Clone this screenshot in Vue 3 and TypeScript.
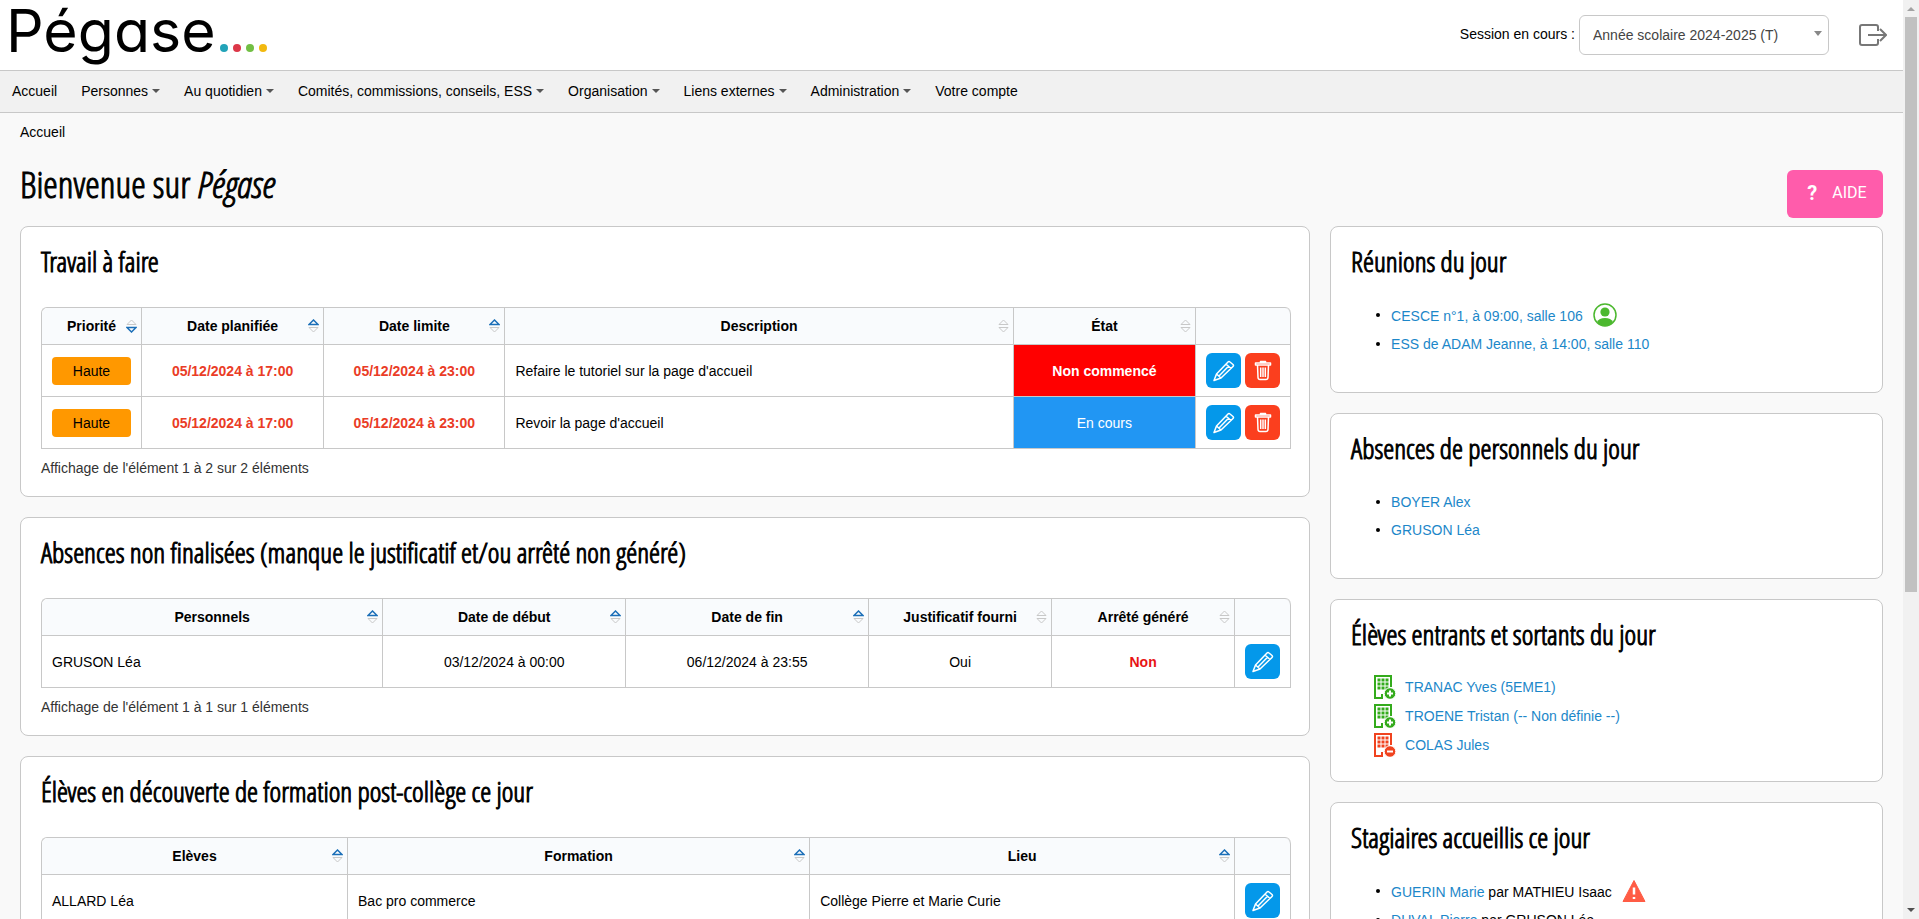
<script setup lang="ts">
import { ref } from 'vue'

type SortState = 'none' | 'asc' | 'desc'
interface Column { label: string; width?: string; sort?: SortState }
interface Cell { text: string; kind?: string }
interface Board {
  title: string
  columns: Column[]
  rows: Cell[][]
  actions: string[]
  info: string
}
interface MenuEntry { label: string; menu: boolean }

const menu: MenuEntry[] = [
  { label: 'Accueil', menu: false },
  { label: 'Personnes', menu: true },
  { label: 'Au quotidien', menu: true },
  { label: 'Comités, commissions, conseils, ESS', menu: true },
  { label: 'Organisation', menu: true },
  { label: 'Liens externes', menu: true },
  { label: 'Administration', menu: true },
  { label: 'Votre compte', menu: false },
]

const session = ref('2024')

const boards: Board[] = [
  {
    title: 'Travail à faire',
    columns: [
      { label: 'Priorité', width: '8%', sort: 'desc' },
      { label: 'Date planifiée', width: '14.6%', sort: 'asc' },
      { label: 'Date limite', width: '14.5%', sort: 'asc' },
      { label: 'Description', sort: 'none' },
      { label: 'État', width: '14.6%', sort: 'none' },
      { label: '', width: '95px' },
    ],
    rows: [
      [
        { text: 'Haute', kind: 'badge' },
        { text: '05/12/2024 à 17:00', kind: 'late' },
        { text: '05/12/2024 à 23:00', kind: 'late' },
        { text: "Refaire le tutoriel sur la page d'accueil" },
        { text: 'Non commencé', kind: 'todo' },
      ],
      [
        { text: 'Haute', kind: 'badge' },
        { text: '05/12/2024 à 17:00', kind: 'late' },
        { text: '05/12/2024 à 23:00', kind: 'late' },
        { text: "Revoir la page d'accueil" },
        { text: 'En cours', kind: 'doing' },
      ],
    ],
    actions: ['edit', 'delete'],
    info: "Affichage de l'élément 1 à 2 sur 2 éléments",
  },
  {
    title: 'Absences non finalisées (manque le justificatif et/ou arrêté non généré)',
    columns: [
      { label: 'Personnels', sort: 'asc' },
      { label: 'Date de début', width: '19.45%', sort: 'asc' },
      { label: 'Date de fin', width: '19.45%', sort: 'asc' },
      { label: 'Justificatif fourni', width: '14.65%', sort: 'none' },
      { label: 'Arrêté généré', width: '14.65%', sort: 'none' },
      { label: '', width: '56px' },
    ],
    rows: [
      [
        { text: 'GRUSON Léa' },
        { text: '03/12/2024 à 00:00', kind: 'center' },
        { text: '06/12/2024 à 23:55', kind: 'center' },
        { text: 'Oui', kind: 'center' },
        { text: 'Non', kind: 'missing' },
      ],
    ],
    actions: ['edit'],
    info: "Affichage de l'élément 1 à 1 sur 1 éléments",
  },
  {
    title: 'Élèves en découverte de formation post-collège ce jour',
    columns: [
      { label: 'Elèves', width: '24.5%', sort: 'asc' },
      { label: 'Formation', width: '37%', sort: 'asc' },
      { label: 'Lieu', sort: 'asc' },
      { label: '', width: '56px' },
    ],
    rows: [
      [{ text: 'ALLARD Léa' }, { text: 'Bac pro commerce' }, { text: 'Collège Pierre et Marie Curie' }],
    ],
    actions: ['edit'],
    info: "Affichage de l'élément 1 à 1 sur 1 éléments",
  },
]

const moves = [
  { name: 'TRANAC Yves (5EME1)', entering: true },
  { name: 'TROENE Tristan (-- Non définie --)', entering: true },
  { name: 'COLAS Jules', entering: false },
]
const windowRows = [4, 8, 12]
const windowCols = [4, 8, 12]
</script>

<template>
  <div class="shell">
    <div class="page">
      <header class="top">
        <a class="logo" href="#" aria-label="Pégase">
          <span class="logo-name">Pégase</span>
          <span class="logo-dots"><i class="dot teal"></i><i class="dot red"></i><i class="dot green"></i><i class="dot yellow"></i></span>
        </a>
        <div class="session">
          <label for="session">Session en cours :</label>
          <div class="select-wrap">
            <select id="session" v-model="session">
              <option value="2024">Année scolaire 2024-2025 (T)</option>
            </select>
            <svg class="select-caret" viewBox="0 0 8 5" aria-hidden="true"><path d="M0 0h8L4 5z" /></svg>
          </div>
          <button class="logout" type="button" aria-label="Se déconnecter">
            <svg viewBox="0 0 28 22" aria-hidden="true">
              <path d="M19 7V3Q19 1 17 1H3Q1 1 1 3V19Q1 21 3 21H17Q19 21 19 19V15M9 11H27M21 5L27 11L21 17" />
            </svg>
          </button>
        </div>
      </header>

      <nav class="menu" aria-label="Menu principal">
        <a v-for="entry in menu" :key="entry.label" href="#">
          {{ entry.label }}
          <svg v-if="entry.menu" class="caret" viewBox="0 0 8 4" aria-hidden="true"><path d="M0 0h8L4 4z" /></svg>
        </a>
      </nav>

      <main class="content">
        <div class="crumb"><a href="#">Accueil</a></div>
        <div class="heading">
          <h1>Bienvenue sur <em>Pégase</em></h1>
          <button class="help" type="button"><b>?</b><span>AIDE</span></button>
        </div>

        <div class="columns">
          <div class="column">
            <section v-for="board in boards" :key="board.title" class="card">
              <h2>{{ board.title }}</h2>
              <table>
                <colgroup>
                  <col v-for="(c, i) in board.columns" :key="i" :style="{ width: c.width }" />
                </colgroup>
                <thead>
                  <tr>
                    <th v-for="(c, i) in board.columns" :key="i" scope="col">
                      <button v-if="c.sort" class="sort" type="button">
                        <span>{{ c.label }}</span>
                        <svg :class="c.sort" viewBox="0 0 11 14" aria-hidden="true">
                          <path class="up" d="M1 5.500L5.500 1L10 5.500Z" />
                          <path class="down" d="M1 8.500L5.500 13L10 8.500Z" />
                        </svg>
                      </button>
                    </th>
                  </tr>
                </thead>
                <tbody>
                  <tr v-for="(row, r) in board.rows" :key="r">
                    <td v-for="(cell, i) in row" :key="i" :class="cell.kind">
                      <span>{{ cell.text }}</span>
                    </td>
                    <td class="actions">
                      <div>
                        <button
                          v-for="a in board.actions"
                          :key="a"
                          type="button"
                          :class="a"
                          :aria-label="a === 'edit' ? 'Modifier' : 'Supprimer'"
                        >
                          <svg v-if="a === 'edit'" viewBox="0 0 24 24" aria-hidden="true">
                            <path d="M2 21.500L4.500 15L16 3Q17 2 18 3L21 5.500Q22 6.500 21 7.500L9 19ZM4.500 15L9 19M14 5L19 9.500M7 17L16.500 7.300" />
                          </svg>
                          <svg v-else viewBox="0 0 24 24" aria-hidden="true">
                            <path d="M9.500 3.500V2.500H14.500V3.500M4.500 4H19.500V6H4.500ZM6.500 6L7 18.500Q7.200 20.500 9 20.500H15Q16.800 20.500 17 18.500L17.500 6M9.700 8.500V18M12 8.500V18M14.300 8.500V18" />
                          </svg>
                        </button>
                      </div>
                    </td>
                  </tr>
                </tbody>
              </table>
              <p class="info">{{ board.info }}</p>
            </section>
          </div>

          <div class="column">
            <section class="card">
              <h2>Réunions du jour</h2>
              <ul>
                <li>
                  <div class="line">
                    <a href="#">CESCE n°1, à 09:00, salle 106</a>
                    <svg class="mark person" viewBox="0 0 24 24" role="img" aria-label="Participant">
                      <circle class="ring" cx="12" cy="12" r="11" />
                      <circle cx="12" cy="9" r="4.600" />
                      <path d="M4 19Q6 15 12 15Q18 15 20 19Q17 23 12 23Q7 23 4 19Z" />
                    </svg>
                  </div>
                </li>
                <li><div class="line"><a href="#">ESS de ADAM Jeanne, à 14:00, salle 110</a></div></li>
              </ul>
            </section>

            <section class="card">
              <h2>Absences de personnels du jour</h2>
              <ul>
                <li><div class="line"><a href="#">BOYER Alex</a></div></li>
                <li><div class="line"><a href="#">GRUSON Léa</a></div></li>
              </ul>
            </section>

            <section class="card">
              <h2>Élèves entrants et sortants du jour</h2>
              <ul class="moves">
                <li v-for="m in moves" :key="m.name" :class="m.entering ? 'in' : 'out'">
                  <svg viewBox="0 0 22 24" aria-hidden="true">
                    <path class="wall" d="M17 12V1H1V23H8V19" />
                    <template v-for="y in windowRows" :key="y">
                      <rect v-for="x in windowCols" :key="x" :x="x - 0.5" :y="y - 0.5" width="3" height="3" />
                    </template>
                    <circle class="disc" cx="16" cy="18.500" r="5.800" />
                    <path class="sign" :d="m.entering ? 'M13 18.500H19M16 15.500V21.500' : 'M13 18.500H19'" />
                  </svg>
                  <a href="#">{{ m.name }}</a>
                </li>
              </ul>
            </section>

            <section class="card">
              <h2>Stagiaires accueillis ce jour</h2>
              <ul>
                <li>
                  <div class="line">
                    <span><a href="#">GUERIN Marie</a> par MATHIEU Isaac</span>
                    <svg class="mark warning" viewBox="0 0 24 24" role="img" aria-label="Attention">
                      <path d="M12 1.500L23 22.500H1Z" />
                      <path class="bang" d="M12 8.500V15.500M12 18V20" />
                    </svg>
                  </div>
                </li>
                <li><div class="line"><span><a href="#">DUVAL Pierre</a> par GRUSON Léa</span></div></li>
              </ul>
            </section>
          </div>
        </div>
      </main>
    </div>

    <div class="scrollbar" aria-hidden="true">
      <svg class="arrow dim" viewBox="0 0 8 4"><path d="M0 4h8L4 0z" /></svg>
      <div class="track"><div class="thumb"></div></div>
      <svg class="arrow" viewBox="0 0 8 4"><path d="M0 0h8L4 4z" /></svg>
    </div>
  </div>
</template>

<style>
body {
  margin: 0;
  background: #f9f9f9;
}
</style>

<style scoped>
* {
  box-sizing: border-box;
}
.shell {
  display: flex;
  height: 100vh;
  overflow: hidden;
  background: #f9f9f9;
  color: #000;
  font: 14px/20px "Liberation Sans", Arial, sans-serif;
}
.page {
  flex: 1;
  min-width: 0;
  overflow: hidden;
}
a {
  color: #1c87c9;
  text-decoration: none;
}
button {
  padding: 0;
  border: 0;
  background: none;
  color: inherit;
  font: inherit;
  cursor: pointer;
}
svg {
  display: block;
  flex: none;
}

.top {
  display: flex;
  justify-content: space-between;
  align-items: center;
  height: 71px;
  padding: 0 16px 0 6px;
  border-bottom: 1px solid #c8c8c8;
  background: #fff;
}
.logo {
  display: flex;
  align-items: baseline;
  gap: 4px;
  padding-bottom: 8px;
  color: #000;
}
.logo-name {
  font: 400 59px/60px Inter, "Century Gothic", sans-serif;
  font-feature-settings: "cv11";
}
.logo-dots {
  display: flex;
  gap: 5px;
}
.dot {
  width: 8px;
  height: 8px;
  border-radius: 50%;
}
.teal { background: #22a3b8; }
.red { background: #dc3748; }
.green { background: #72bf44; }
.yellow { background: #f2b90f; }

.session {
  display: flex;
  align-items: center;
  gap: 4px;
}
.session label {
  padding-bottom: 2px;
}
.select-wrap {
  position: relative;
}
select {
  display: block;
  width: 250px;
  height: 40px;
  padding: 0 28px 0 13px;
  border: 1px solid #c8c8c8;
  border-radius: 6px;
  background: #fff;
  color: #444;
  font: inherit;
  appearance: none;
}
.select-caret {
  position: absolute;
  top: 16px;
  right: 7px;
  width: 8px;
  height: 5px;
  fill: #888;
  pointer-events: none;
}
.logout {
  margin-left: 26px;
}
.logout svg {
  width: 28px;
  height: 22px;
  fill: none;
  stroke: #777;
  stroke-width: 2;
}

.menu {
  display: flex;
  height: 42px;
  padding-bottom: 2px;
  border-bottom: 1px solid #c8c8c8;
  background: #f1f1f1;
}
.menu a {
  display: flex;
  align-items: center;
  gap: 4px;
  padding: 0 12px;
  color: #000;
}
.caret {
  width: 8px;
  height: 4px;
  fill: #555;
}

.content {
  padding: 9px 20px 20px;
}
.crumb a {
  color: #000;
}
h1,
h2 {
  margin: 0;
  font-family: "Open Sans Condensed Light", "Open Sans Condensed", "Liberation Sans Narrow", "Open Sans", sans-serif;
  font-weight: 300;
  -webkit-text-stroke: 1px currentColor;
}
h1 {
  font-size: 37px;
  line-height: 48px;
}
.heading {
  display: flex;
  justify-content: space-between;
  align-items: flex-end;
  height: 76px;
}
.heading h1 {
  padding-bottom: 10px;
}
.help {
  display: flex;
  align-items: center;
  justify-content: center;
  gap: 15px;
  width: 96px;
  height: 48px;
  padding: 0 0 2px 4px;
  border-radius: 6px;
  background: #ff5cab;
  color: #fff;
  font: 400 16px/20px Roboto, sans-serif;
}
.help b {
  font-size: 20px;
}

.columns {
  display: grid;
  grid-template-columns: minmax(0, 7fr) minmax(0, 3fr);
  align-items: start;
  gap: 20px;
  margin-top: 8px;
}
.column {
  display: flex;
  flex-direction: column;
  gap: 20px;
}
.card {
  padding: 14px 18px 18px 20px;
  border: 1px solid #c8c8c8;
  border-radius: 8px;
  background: #fff;
}
.card h2 {
  margin-bottom: 26px;
  font-size: 28px;
  line-height: 40px;
}

table {
  width: 100%;
  table-layout: fixed;
  border-collapse: separate;
  border-spacing: 0;
  border: solid #c8c8c8;
  border-width: 1px 0 0 1px;
  border-radius: 6px 6px 0 0;
}
th,
td {
  border: solid #c8c8c8;
  border-width: 0 1px 1px 0;
}
th {
  height: 37px;
  padding: 0;
  background: #f9fbfd;
}
th:first-child {
  border-top-left-radius: 6px;
}
th:last-child {
  border-top-right-radius: 6px;
}
td {
  height: 52px;
  padding: 0 10px;
}
.sort {
  display: grid;
  grid-template-columns: 1fr auto 1fr;
  align-items: center;
  width: 100%;
  height: 36px;
  padding: 0 4px;
  font-weight: 700;
}
.sort span {
  grid-column: 2;
}
.sort svg {
  justify-self: end;
  width: 11px;
  height: 14px;
  fill: none;
  stroke: #c8c8c8;
}
.asc .up,
.desc .down {
  stroke: #1c6fb8;
  stroke-width: 1.5;
}
.badge span {
  display: block;
  height: 28px;
  border-radius: 4px;
  background: #ff9800;
  line-height: 28px;
  text-align: center;
}
.late,
.center,
.missing,
.todo,
.doing {
  text-align: center;
}
.late,
.missing,
.todo {
  font-weight: 700;
}
.late { color: #ea3c26; }
.missing { color: #e81414; }
.todo {
  background: #f00;
  color: #fff;
}
.doing {
  background: #2196f3;
  color: #fff;
}
.actions div {
  display: flex;
  gap: 4px;
}
.actions button {
  display: flex;
  align-items: center;
  justify-content: center;
  width: 35px;
  height: 35px;
  border-radius: 6px;
}
.actions svg {
  width: 24px;
  height: 24px;
  fill: none;
  stroke: #fff;
  stroke-width: 1.5;
  stroke-linejoin: round;
}
.edit { background: #0498ea; }
.delete { background: #fb3f1e; }
.info {
  margin: 9px 0 0;
  color: #333;
}

ul {
  margin: 0;
  padding: 0 0 0 40px;
  list-style: disc;
}
.card ul {
  margin: -6px 0 16px;
}
.line {
  display: inline-flex;
  align-items: center;
  gap: 10px;
  min-height: 28px;
  vertical-align: middle;
}
.mark {
  width: 24px;
  height: 24px;
  margin: 2px 0 3px;
}
.person {
  fill: #4cb82f;
}
.person .ring {
  fill: none;
  stroke: #4cb82f;
  stroke-width: 1.5;
}
.warning {
  fill: #ff5c45;
  stroke: #ff5c45;
  stroke-linejoin: round;
}
.warning .bang {
  fill: none;
  stroke: #fff;
  stroke-width: 2.5;
}
.card .moves {
  margin: -8px 0 4px;
  padding-left: 23px;
  list-style: none;
}
.moves li {
  display: flex;
  align-items: center;
  gap: 9px;
  height: 29px;
}
.moves svg {
  width: 22px;
  height: 24px;
}
.moves .wall {
  fill: none;
  stroke-width: 2;
}
.in { fill: #34ab1c; }
.in .wall { stroke: #34ab1c; }
.out { fill: #f0431f; }
.out .wall { stroke: #f0431f; }
.moves .disc {
  stroke: #fff;
}
.moves .sign {
  stroke: #fff;
  stroke-width: 2;
}

.scrollbar {
  display: flex;
  flex-direction: column;
  align-items: center;
  gap: 6px;
  width: 16px;
  padding: 7px 0;
  background: #f1f1f1;
}
.track {
  flex: 1;
  width: 12px;
}
.thumb {
  height: 65%;
  background: #c1c1c1;
}
.arrow {
  width: 8px;
  height: 4px;
  fill: #505050;
}
.dim {
  fill: #a3a3a3;
}
</style>
